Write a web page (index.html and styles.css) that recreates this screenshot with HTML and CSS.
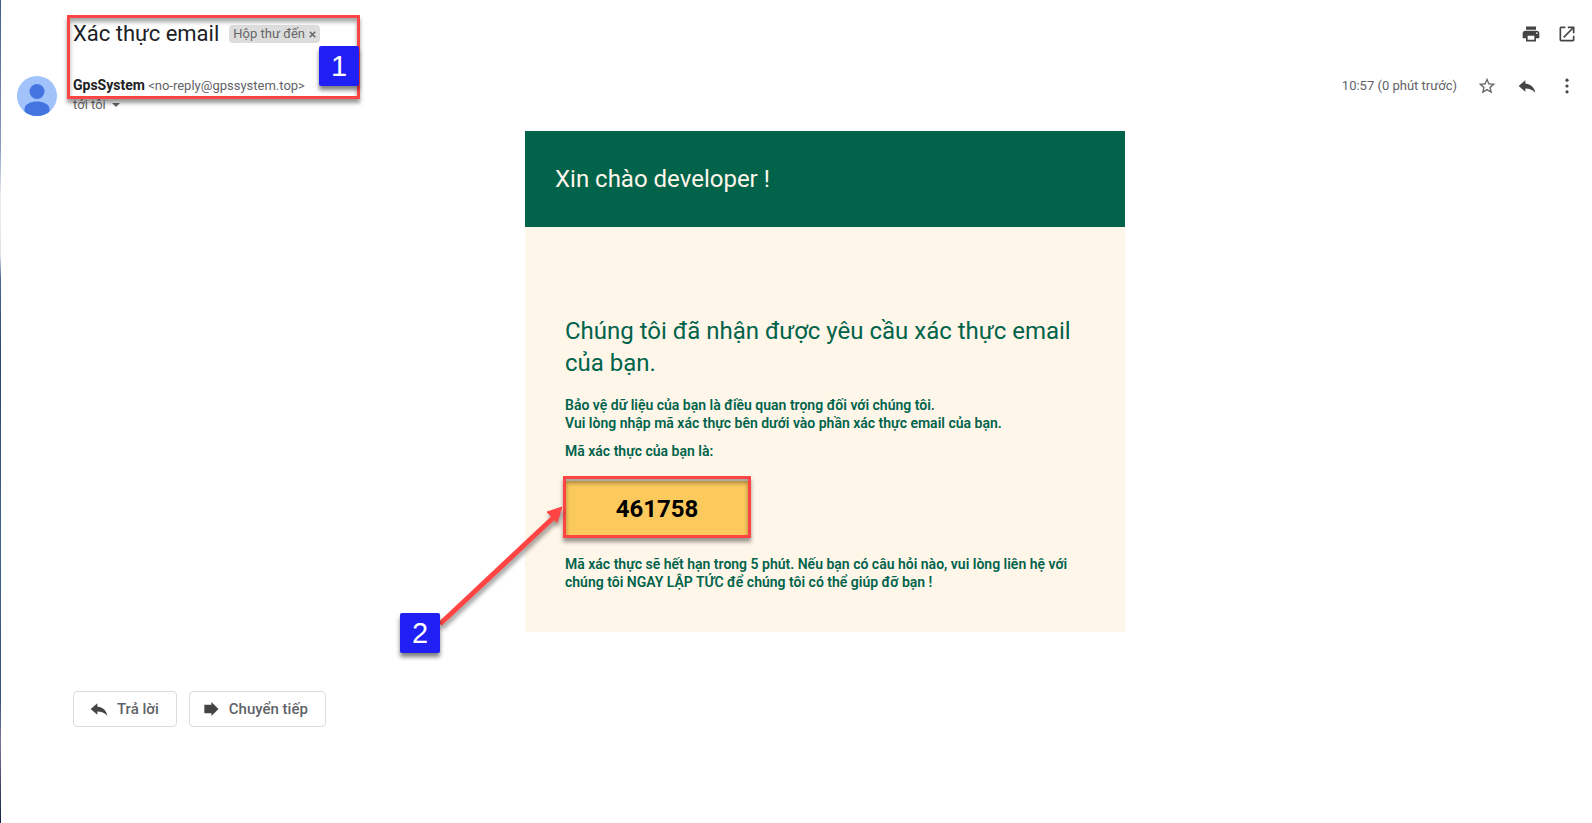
FILE: index.html
```
<!DOCTYPE html>
<html lang="vi">
<head>
<meta charset="utf-8">
<title>Xác thực email</title>
<link rel="stylesheet" href="styles.css">
</head>
<body>
<main class="mail">
  <header class="subject-row">
    <h1 class="subject">Xác thực email</h1>
    <span class="chip">Hộp thư đến
      <button class="chip-close" aria-label="Xóa nhãn"><svg width="7" height="7" viewBox="0 0 7 7"><path d="M.8.8l5.4 5.4M6.2.8L.8 6.2" stroke="#666" stroke-width="1.6"/></svg></button>
    </span>
    <div class="tools">
      <button class="icon-btn" aria-label="In"><svg width="20" height="20" viewBox="0 0 24 24"><path d="M19 8H5c-1.660 0-3 1.340-3 3v6h4v4h12v-4h4v-6c0-1.660-1.340-3-3-3zm-3 11H8v-5h8v5zm3-7c-.55 0-1-.45-1-1s.45-1 1-1 1 .45 1 1-.45 1-1 1zm-1-9H6v4h12V3z"/></svg></button>
      <button class="icon-btn" aria-label="Mở cửa sổ mới"><svg width="20" height="20" viewBox="0 0 24 24"><path d="M19 19H5V5h5V3H5a2 2 0 0 0-2 2v14a2 2 0 0 0 2 2h14c1.100 0 2-.9 2-2v-5h-2v5zM13 3v2h4.600L7.300 15.300l1.400 1.400L19 6.400V11h2V3h-8z"/></svg></button>
    </div>
    <div class="frame frame-sender"><span class="badge badge-one">1</span></div>
  </header>

  <section class="sender-row">
    <svg class="avatar" width="40" height="40" viewBox="0 0 40 40" role="img" aria-label="GpsSystem"><defs><clipPath id="face"><circle cx="20" cy="20" r="20"/></clipPath></defs><g clip-path="url(#face)"><path fill="#a1c2fa" d="M0 0h40v40H0z"/><circle cx="20" cy="15.500" r="7.500" fill="#4374e0"/><path fill="#4374e0" d="M7.500 40v-7c0-5 6.500-7.500 12.500-7.500S32.500 28 32.500 33v7z"/></g></svg>
    <div class="sender">
      <p class="from"><strong class="name">GpsSystem</strong> <span class="address">&lt;no-reply@gpssystem.top&gt;</span></p>
      <button class="to">tới tôi <svg width="8" height="4" viewBox="0 0 8 4"><path d="M0 0h8L4 4z" fill="#666"/></svg></button>
    </div>
    <time class="time">10:57 (0 phút trước)</time>
    <div class="tools">
      <button class="icon-btn" aria-label="Gắn dấu sao"><svg width="20" height="20" viewBox="0 0 24 24"><path fill="#666" d="M22 9.240l-7.190-.62L12 2 9.190 8.630 2 9.240l5.460 4.730L5.820 21 12 17.270 18.180 21l-1.630-7.030L22 9.240zM12 15.400l-3.760 2.270 1-4.280-3.320-2.880 4.380-.38L12 6.100l1.710 4.040 4.380.38-3.320 2.880 1 4.280L12 15.400z"/></svg></button>
      <button class="icon-btn" aria-label="Trả lời thư"><svg width="20" height="20" viewBox="0 0 24 24"><path d="M10 9V5l-8 7 8 7v-4.100c5 0 8.500 1.600 12 5.100-1-5-4-10-12-11z"/></svg></button>
      <button class="icon-btn" aria-label="Thêm"><svg width="20" height="20" viewBox="0 0 24 24"><circle cx="12" cy="5" r="1.900"/><circle cx="12" cy="12" r="1.900"/><circle cx="12" cy="19" r="1.900"/></svg></button>
    </div>
  </section>

  <article class="card">
    <h2 class="greeting">Xin chào developer !</h2>
    <div class="content">
      <h3 class="lead">Chúng tôi đã nhận được yêu cầu xác thực email của bạn.</h3>
      <p class="copy">Bảo vệ dữ liệu của bạn là điều quan trọng đối với chúng tôi.<br>Vui lòng nhập mã xác thực bên dưới vào phần xác thực email của bạn.</p>
      <p class="copy">Mã xác thực của bạn là:</p>
      <div class="code">461758
        <div class="frame frame-code"></div>
        <svg class="arrow" width="140" height="136" viewBox="0 0 140 136" aria-hidden="true"><path d="M16 121L129 15" stroke="#ff4444" stroke-width="5"/><path d="M138 4l-5 15.500L123 9z" fill="#ff4444" stroke="#ff4444"/></svg>
        <span class="badge badge-two">2</span>
      </div>
      <p class="copy">Mã xác thực sẽ hết hạn trong 5 phút. Nếu bạn có câu hỏi nào, vui lòng liên hệ với chúng tôi NGAY LẬP TỨC để chúng tôi có thể giúp đỡ bạn !</p>
    </div>
  </article>

  <footer class="actions">
    <button class="action"><svg width="20" height="20" viewBox="0 0 24 24"><path d="M10 9V5l-8 7 8 7v-4.100c5 0 8.500 1.600 12 5.100-1-5-4-10-12-11z"/></svg>Trả lời</button>
    <button class="action action-forward"><svg width="20" height="20" viewBox="0 0 24 24"><path d="M12.500 7V3.500L21 12l-8.500 8.500V17H4V7z"/></svg>Chuyển tiếp</button>
  </footer>
</main>
</body>
</html>
```
FILE: styles.css
```
* { box-sizing: border-box; }
body {
  margin: 0;
  background: #fff;
  color: #202124;
  font-family: Roboto, "Noto Sans", sans-serif;
}
h1, h2, h3, p { margin: 0; font-weight: 400; }
button {
  margin: 0;
  padding: 0;
  border: 0;
  background: none;
  color: inherit;
  font: inherit;
}
svg { display: block; fill: #444; }
.mail {
  min-height: 100vh;
  padding: 20px 15px 20px 72px;
  border-left: 1px solid;
  border-image: linear-gradient(#41598a, #8d9cc4 18%, #e8ebee 24%, #dfe5e8 31%, #4c6594 34%, #2e4470 44%, #43618f 65%, #3a5280 85%, #7d7898 90%, #14203f) 1;
}
.subject-row {
  position: relative;
  display: flex;
  align-items: center;
  height: 28px;
}
.subject { font-size: 22px; line-height: 28px; }
.chip {
  display: flex;
  align-items: center;
  gap: 4px;
  height: 18px;
  margin-left: 10px;
  padding: 0 4px;
  border-radius: 4px;
  background: #ddd;
  color: #666;
  font-size: 13px;
  line-height: 18px;
}
.tools { display: flex; gap: 20px; }
.subject-row .tools { gap: 16px; margin-left: auto; }
.sender-row {
  position: relative;
  display: flex;
  align-items: flex-start;
  height: 83px;
  padding-top: 28px;
}
.avatar { position: absolute; left: -56px; top: 28px; }
.sender { flex: 1; font-size: 13px; }
.from { color: #5f6368; line-height: 19px; }
.name { color: #202124; font-size: 14px; font-weight: 700; }
.to {
  display: flex;
  align-items: center;
  gap: 6px;
  color: #666;
  line-height: 20px;
}
.time { margin-right: 20px; color: #5f6368; font-size: 13px; line-height: 20px; }
.card { max-width: 600px; margin: 0 auto; background: #fff6ea; color: #00634a; }
.greeting {
  padding: 32px 30px;
  background: #00634a;
  color: #fff6ea;
  font-size: 24px;
  line-height: 32px;
}
.content {
  display: flex;
  flex-direction: column;
  align-items: flex-start;
  padding: 88px 40px 41px;
}
.lead { margin-bottom: 17px; font-size: 24px; line-height: 32px; }
.copy { margin-bottom: 10px; font-size: 14px; font-weight: 600; line-height: 18px; }
.code {
  position: relative;
  width: 184px;
  margin: 11px 0 18px;
  padding: 12px;
  background: #fbc95c;
  color: #000;
  font-size: 24px;
  font-weight: 700;
  line-height: 32px;
  text-align: center;
}
.copy:last-child { margin-bottom: 0; }
.frame {
  position: absolute;
  border: 3px solid #ff4444;
  box-shadow: 0 4px 4px rgba(0, 0, 0, .4), inset 0 4px 4px rgba(0, 0, 0, .35);
}
.frame-sender { left: -6px; top: -5px; width: 293px; height: 84px; z-index: 1; pointer-events: none; }
.frame-code { inset: -5px -2px -1px; }
.badge {
  position: absolute;
  width: 40px;
  height: 40px;
  border-radius: 2px;
  background: #2020f5;
  box-shadow: 0 4px 4px rgba(0, 0, 0, .5);
  color: #fff;
  font-family: "Liberation Sans", Arial, sans-serif;
  font-size: 29px;
  font-weight: 400;
  line-height: 40px;
  text-align: center;
}
.badge-one { right: -2px; top: 28px; }
.arrow { position: absolute; left: -141px; top: 22px; filter: drop-shadow(1px 4px 2px rgba(0, 0, 0, .4)); }
.badge-two { left: -165px; top: 132px; }
.actions { display: flex; gap: 12px; margin-top: 59px; }
.action {
  display: flex;
  align-items: center;
  gap: 8px;
  height: 36px;
  padding: 0 17px 0 15px;
  border: 1px solid #dadce0;
  border-radius: 4px;
  color: #5f6368;
  font-size: 15px;
  font-weight: 500;
}
.action-forward { padding-left: 11px; }
```
